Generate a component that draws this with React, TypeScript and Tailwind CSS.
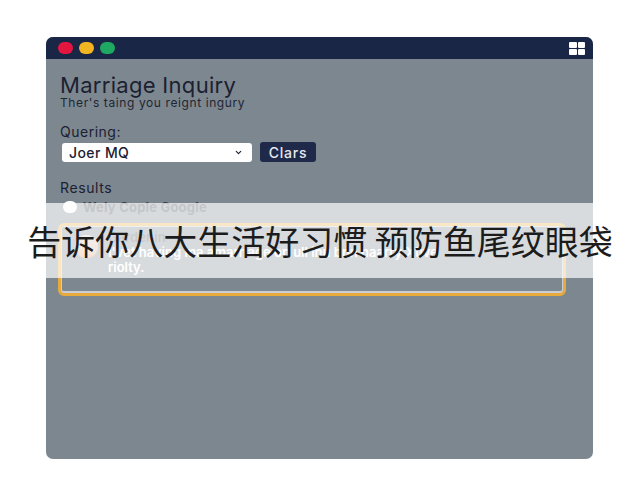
import { ChevronDown } from 'lucide-react';

function App() {
  return (
    <div className="relative w-[640px] h-[480px] overflow-hidden bg-white pt-[37px] pl-[46px] font-['Inter','Noto_Sans_CJK_SC',sans-serif]">
      {/* App window */}
      <div className="w-[547px] h-[422px] rounded-[7px] overflow-hidden bg-[#7d8790] flex flex-col">
        <div className="h-[22px] bg-[#1a2645] flex items-center justify-between pl-[12px] pr-[8px]">
          <div className="flex gap-[6px]">
            <span className="w-[15px] h-[12px] rounded-full bg-[#e3163f]" />
            <span className="w-[15px] h-[12px] rounded-full bg-[#f2b420]" />
            <span className="w-[15px] h-[12px] rounded-full bg-[#1fa862]" />
          </div>
          <div className="grid grid-cols-2 gap-[1px] w-[16px]">
            <span className="h-[6px] rounded-[1px] bg-white" />
            <span className="h-[6px] rounded-[1px] bg-white" />
            <span className="h-[6px] rounded-[1px] bg-white" />
            <span className="h-[6px] rounded-[1px] bg-white" />
          </div>
        </div>

        <div className="flex flex-col pl-[14px] pt-[13px]">
          <h1 className="text-[22px] leading-[26px] text-[#1b2130] tracking-[0.3px]">Marriage Inquiry</h1>
          <p className="-mt-[2px] text-[12px] leading-[14px] text-[#1f2633] tracking-[0.6px]">Ther's taing you reignt ingury</p>

          <div className="mt-[13px] text-[14px] leading-[18px] text-[#1b2130] tracking-[0.5px]">Quering:</div>
          <div className="mt-[1px] ml-[2px] flex items-center gap-[8px]">
            <div className="w-[190px] h-[19px] rounded-[3px] bg-white flex items-center justify-between pl-[7px] pr-[9px] text-[14px] font-medium text-[#1b2130] tracking-[0.4px]">
              <span>Joer MQ</span>
              <ChevronDown size={9} strokeWidth={3} />
            </div>
            <div className="w-[56px] h-[20px] rounded-[3px] bg-[#1f2a4a] flex items-center justify-center text-[14px] font-medium text-[#e4e8ee] tracking-[0.8px]">
              Clars
            </div>
          </div>

          <div className="mt-[17px] text-[14px] leading-[18px] text-[#1b2130] tracking-[0.6px]">Results</div>
          <div className="mt-[3px] ml-[3px] flex items-center gap-[6px]">
            <span className="w-[14px] h-[12px] rounded-full bg-white" />
            <span className="text-[13px] leading-[14px] font-bold text-[#3a424c] tracking-[0.2px]">Wely Cople Google</span>
          </div>

          <div className="mt-[9px] -ml-[2px] w-[508px] h-[73px] rounded-[6px] border-[3px] border-[#e8aa3c] bg-[#7d8790] shadow-[inset_0_-2px_0_#c9ced4,inset_0_0_0_1px_#c9ced4] flex items-start gap-[10px] pl-[14px] pt-[4px]">
            <span className="mt-[5px] w-[23px] h-[23px] rounded-full bg-gradient-to-b from-[#c9ced4] to-[#e8a070] shrink-0" />
            <div className="text-[13px] leading-[15px] font-semibold whitespace-nowrap">
              <p className="text-[#4a525a]">Garder in</p>
              <p className="text-white">I'vet having ma amarriage on ull inu bnn naarry Xtive</p>
              <p className="text-white">riolty.</p>
            </div>
          </div>
        </div>
      </div>

      {/* Caption band */}
      <div className="absolute left-0 top-[203px] w-[640px] h-[75px] bg-white/70 flex items-center justify-center text-[34px] text-[#1c1c1c] whitespace-nowrap font-['Noto_Sans_CJK_SC',sans-serif]">
        告诉你八大生活好习惯 预防鱼尾纹眼袋
      </div>
    </div>
  );
}

export default App;
